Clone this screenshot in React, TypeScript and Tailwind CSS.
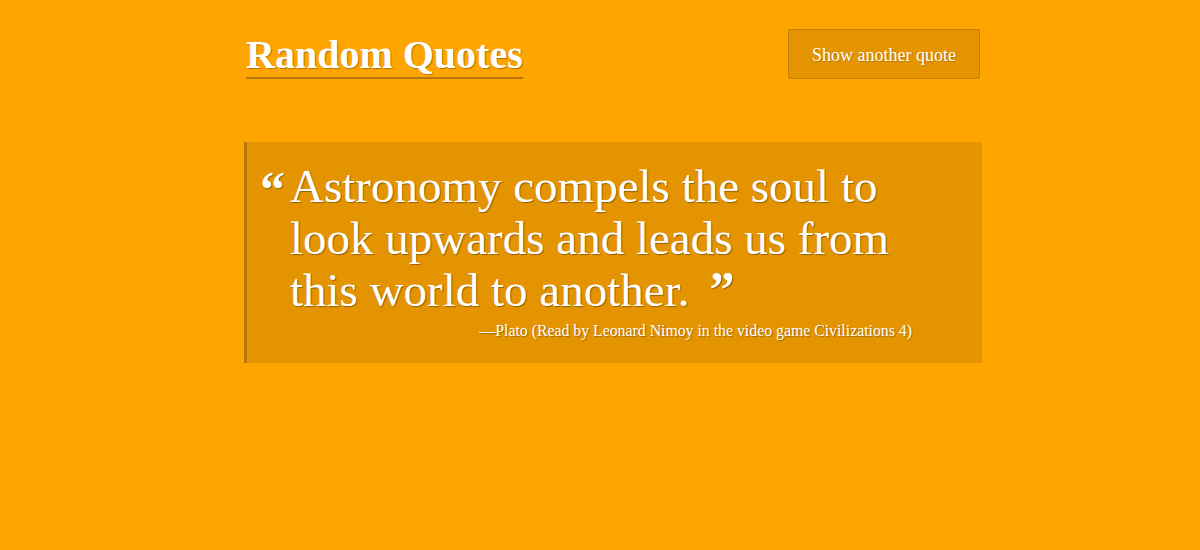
import React from "react";

export default function App() {
  return (
    <div className="w-[1200px] h-[550px] bg-[#ffa500] overflow-hidden" style={{ fontFamily: '"Liberation Serif", "DejaVu Serif", serif' }}>
      <div className="w-[738px] ml-[244px] pt-[29px]">
        <div className="flex items-start justify-between">
          <h1 className="ml-[2px] mt-[3px] text-[40px] leading-[45px] font-bold text-white border-b-2 border-[#b8770c] [text-shadow:1px_1px_1px_rgba(0,0,0,0.3)]">
            Random Quotes
          </h1>
          <button className="mr-[2px] w-[192px] h-[50px] pt-[2px] bg-[#e39400] border border-[#c3800a] rounded-[2px] text-white text-[18px] [text-shadow:1px_1px_1px_rgba(0,0,0,0.2)]">
            Show another quote
          </button>
        </div>
        <div className="mt-[63px] h-[221px] bg-[#e39400] border-l-[3px] border-[#b8770c] pl-[13px] pr-[70px] pt-[18px]">
          <div className="flex">
            <span className="shrink-0 w-[30px] h-[30px] text-[50px] leading-[50px] font-bold text-white mt-[4px] [text-shadow:1px_1px_1px_rgba(0,0,0,0.3)]">“</span>
            <p className="text-[47px] leading-[52px] text-white [text-shadow:1px_1px_1px_rgba(0,0,0,0.35)]">
              Astronomy compels the soul to look upwards and leads us from this world to another.
              <span className="inline-block ml-[20px] h-[30px] text-[50px] font-bold align-top leading-[50px]">”</span>
            </p>
          </div>
          <div className="text-right mt-[3px] text-[15.8px] text-white [text-shadow:1px_1px_1px_rgba(0,0,0,0.3)]">
            —Plato (Read by Leonard Nimoy in the video game Civilizations 4)
          </div>
        </div>
      </div>
    </div>
  );
}
